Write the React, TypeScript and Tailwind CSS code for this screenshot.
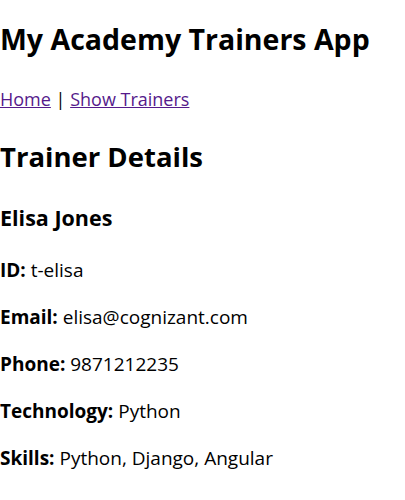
const trainer = {
  name: "Elisa Jones",
  id: "t-elisa",
  email: "elisa@cognizant.com",
  phone: "9871212235",
  technology: "Python",
  skills: "Python, Django, Angular",
};

const rows = [
  { label: "ID:", value: trainer.id },
  { label: "Email:", value: trainer.email },
  { label: "Phone:", value: trainer.phone },
  { label: "Technology:", value: trainer.technology },
  { label: "Skills:", value: trainer.skills },
];

export default function App() {
  return (
    <div className="min-h-[500px] bg-white text-black font-['Open_Sans',sans-serif]">
      <h1 className="pt-[21px] text-[28.5px] font-bold leading-[36px]">My Academy Trainers App</h1>

      <nav className="mt-[28px] text-[18px] leading-[28px]">
        <a href="#" className="text-[#551a8b] underline">Home</a> |{" "}
        <a href="#" className="text-[#551a8b] underline">Show Trainers</a>
      </nav>

      <h2 className="mt-[26px] text-[27.5px] font-bold leading-[36px]">Trainer Details</h2>

      <div className="mt-[29px] flex flex-col gap-[19px]">
        <h3 className="text-[21.5px] font-bold leading-[28px]">{trainer.name}</h3>
        {rows.map((r, i) => (
          <p key={r.label} className={`text-[19px] leading-[28px] ${i === 0 ? "mt-[5px]" : ""}`}>
            <strong>{r.label}</strong> {r.value}
          </p>
        ))}
      </div>
    </div>
  );
}
